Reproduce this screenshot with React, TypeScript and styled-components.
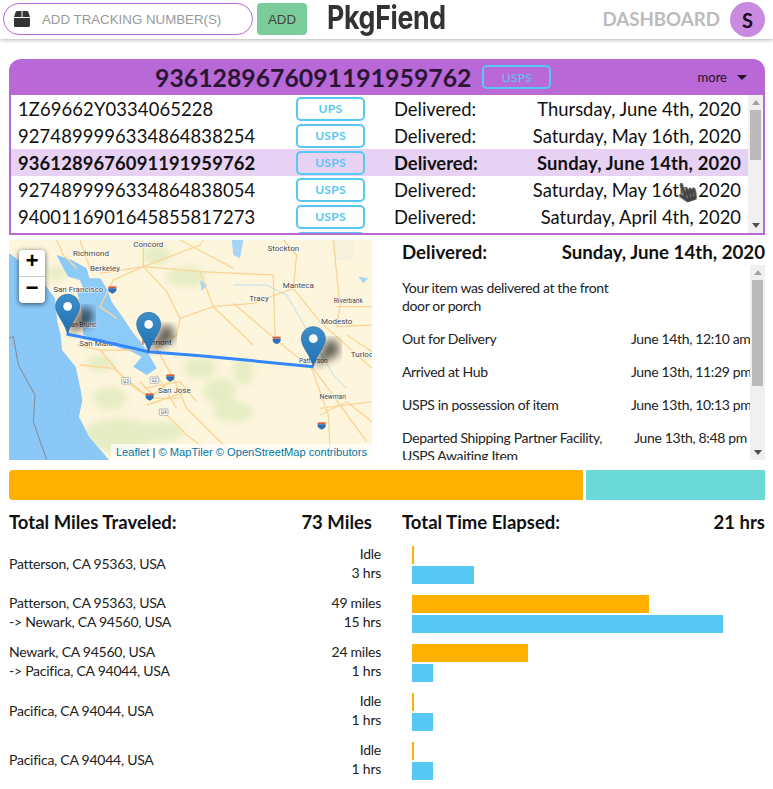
import styled, { createGlobalStyle } from 'styled-components';
import { FaBox, FaHandPointer } from 'react-icons/fa';

const PURPLE = '#b968d8';
const BLUE = '#56c8f3';
const ORANGE = '#ffb000';

const GlobalStyle = createGlobalStyle`
  html, body { margin: 0; padding: 0; background: #fff; }
  body { font-family: Lato, "Noto Sans", sans-serif; color: #111; }
  * { box-sizing: border-box; }
`;

const TopBar = styled.header`
  height: 39px;
  padding: 3px 8px 0 3px;
  display: flex;
  align-items: flex-start;
  box-shadow: 0 1px 4px rgba(0, 0, 0, 0.3);
`;

const SearchPill = styled.div`
  width: 250px;
  height: 32px;
  border: 1px solid ${PURPLE};
  border-radius: 16px;
  display: flex;
  align-items: center;
  padding-left: 10px;
  gap: 12px;
  color: #333;
  font-family: "Liberation Sans", Arial, sans-serif;
`;

const Placeholder = styled.span`
  font-size: 13.3px;
  color: #999;
`;

const AddButton = styled.button`
  width: 50px;
  height: 32px;
  margin-left: 4px;
  border: 0;
  border-radius: 4px;
  background: #7acc9a;
  color: #444;
  font-family: "Liberation Sans", Arial, sans-serif;
  font-size: 13.3px;
  padding: 0;
`;

const Logo = styled.div`
  margin: -6px 0 0 20px;
  width: 120px;
  font-family: Inter, sans-serif;
  font-weight: 700;
  font-size: 33px;
  line-height: 40px;
  letter-spacing: -0.4px;
  white-space: nowrap;
  color: #333;
  transform: scaleX(0.81);
  transform-origin: left center;
`;

const DashboardLink = styled.div`
  margin-left: auto;
  font-size: 18.7px;
  font-weight: 700;
  line-height: 32px;
  color: #bbb;
`;

const Avatar = styled.div`
  width: 35px;
  height: 35px;
  margin: -1px 0 0 10px;
  border-radius: 50%;
  background: #c98be0;
  display: flex;
  align-items: center;
  justify-content: center;
  font-size: 20px;
  font-weight: 700;
  color: #1a0a22;
`;

const Page = styled.main`
  position: relative;
  padding: 20px 8px 0 9px;
`;

const TrackingHead = styled.div`
  height: 36px;
  border-radius: 12px 12px 0 0;
  background: ${PURPLE};
  display: flex;
  align-items: center;
  padding: 0 18px 0 146px;
`;

const HeadNumber = styled.div`
  font-size: 24.8px;
  font-weight: 700;
  color: #2a1633;
`;

const Carrier = styled.div<{ $plain?: boolean }>`
  width: 69px;
  height: 24px;
  border: 2px solid ${BLUE};
  border-radius: 5px;
  display: flex;
  align-items: center;
  justify-content: center;
  flex: none;
  font-size: 12px;
  font-weight: ${(p) => (p.$plain ? 400 : 700)};
  letter-spacing: 0.3px;
  color: ${BLUE};
`;

const HeadCarrier = styled(Carrier)`
  margin-left: 11px;
`;

const More = styled.div`
  margin-left: auto;
  display: flex;
  align-items: center;
  gap: 10px;
  font-size: 13px;
  color: #1f1026;
`;

const Caret = styled.span`
  width: 0;
  height: 0;
  border-left: 5px solid transparent;
  border-right: 5px solid transparent;
  border-top: 5px solid #1f1026;
`;

const TrackingList = styled.div`
  height: 140px;
  border: 2px solid ${PURPLE};
  border-top: 0;
  display: flex;
`;

const ListRows = styled.div`
  flex: 1;
  min-width: 0;
  overflow: hidden;
`;

const Rail = styled.div`
  width: 15px;
  flex: none;
  background: #f0f0f0;
  display: flex;
  flex-direction: column;
`;

const RailArrow = styled.div<{ $down?: boolean }>`
  height: 15px;
  flex: none;
  display: flex;
  align-items: center;
  justify-content: center;
  margin-top: ${(p) => (p.$down ? 'auto' : '0')};

  &::before {
    content: '';
    border-left: 4.5px solid transparent;
    border-right: 4.5px solid transparent;
    ${(p) => (p.$down ? 'border-top: 5px solid #505050;' : 'border-bottom: 5px solid #a3a3a3;')}
  }
`;

const RailThumb = styled.div<{ $height: number }>`
  height: ${(p) => p.$height}px;
  margin: 0 2px;
  background: #bbb;
`;

const TrackingRow = styled.div<{ $active?: boolean }>`
  height: 27px;
  display: flex;
  align-items: center;
  padding: 0 7px;
  font-size: 18.4px;
  font-weight: ${(p) => (p.$active ? 700 : 400)};
  background: ${(p) => (p.$active ? '#e8d2f4' : 'transparent')};
`;

const TrackingNumber = styled.span`
  width: 278px;
  flex: none;
  white-space: nowrap;
  letter-spacing: 0.12px;
`;

const Status = styled.span`
  margin-left: 29px;
`;

const DateText = styled.span<{ $active?: boolean }>`
  margin-left: auto;
  letter-spacing: ${(p) => (p.$active ? '0.17px' : '0')};
`;

const Pointer = styled.div`
  position: absolute;
  left: 677px;
  top: 143px;
  transform: rotate(-18deg);
  color: #444;
  font-size: 20px;
  line-height: 0;
  filter: drop-shadow(0 0 1px #fff);
`;

const MiddleRow = styled.section`
  margin-top: 5px;
  display: grid;
  grid-template-columns: 363px 363px;
  column-gap: 30px;
`;

const MapPane = styled.div`
  position: relative;
  height: 220px;
  overflow: hidden;
`;

const MapDrawing = styled.svg`
  display: block;
  width: 363px;
  height: 220px;
`;

const ZoomControl = styled.div`
  position: absolute;
  left: 10px;
  top: 10px;
  width: 26px;
  border-radius: 4px;
  background: #fff;
  box-shadow: 0 1px 5px rgba(0, 0, 0, 0.65);
`;

const ZoomButton = styled.div<{ $first?: boolean }>`
  height: 26.5px;
  display: flex;
  align-items: center;
  justify-content: center;
  font-family: "Liberation Mono", monospace;
  font-weight: 700;
  font-size: 22px;
  color: #000;
  border-bottom: ${(p) => (p.$first ? '1px solid #ccc' : '0')};
`;

const Attribution = styled.div`
  position: absolute;
  right: 0;
  bottom: 0;
  height: 16px;
  padding: 0 5px;
  background: rgba(255, 255, 255, 0.7);
  font-family: "Liberation Sans", Arial, sans-serif;
  font-size: 11.15px;
  line-height: 16px;
  color: #333;
`;

const AttrLink = styled.span`
  color: #0078a8;
`;

const DetailPane = styled.div`
  min-width: 0;
`;

const DetailHead = styled.div`
  height: 25px;
  padding-bottom: 2px;
  display: flex;
  justify-content: space-between;
  align-items: center;
  font-size: 18.7px;
  font-weight: 700;
`;

const EventFrame = styled.div`
  height: 195px;
  display: flex;
`;

const EventList = styled.div`
  flex: 1;
  min-width: 0;
  overflow: hidden;
  padding-top: 14px;
  display: flex;
  flex-direction: column;
  gap: 15px;
`;

const EventRow = styled.div`
  display: grid;
  grid-template-columns: 229px 119px;
  flex: none;
  font-size: 14px;
  line-height: 18px;
  letter-spacing: -0.35px;
  color: #222;
`;

const EventText = styled.div`
  width: 212px;
`;

const EventTime = styled.div`
  text-align: center;
  white-space: nowrap;
`;

const Progress = styled.div`
  margin-top: 10px;
  height: 30px;
  display: flex;
  gap: 3px;
`;

const ProgressPart = styled.div<{ $color: string; $width: number; $rounded?: boolean }>`
  width: ${(p) => p.$width}px;
  flex: ${(p) => (p.$rounded ? 'none' : 1)};
  background: ${(p) => p.$color};
  border-radius: ${(p) => (p.$rounded ? '4px 0 0 4px' : '0')};
`;

const Totals = styled.div`
  margin-top: 10px;
  height: 25px;
  display: grid;
  grid-template-columns: 363px 363px;
  column-gap: 30px;
`;

const TotalCell = styled.div`
  display: flex;
  justify-content: space-between;
  align-items: center;
  padding-bottom: 2px;
  font-size: 18.5px;
  font-weight: 700;
`;

const Legs = styled.div`
  margin-top: 11px;
  display: flex;
  flex-direction: column;
  gap: 11px;
`;

const Leg = styled.div`
  display: grid;
  grid-template-columns: 372px 1fr;
  grid-template-rows: 34px;
  column-gap: 31px;
  height: 38px;
  font-size: 14px;
  line-height: 19px;
  letter-spacing: -0.25px;
  color: #222;
`;

const LegText = styled.div`
  display: flex;
  justify-content: space-between;
  align-items: center;
`;

const LegValues = styled.div`
  text-align: right;
`;

const LegBars = styled.div`
  display: flex;
  flex-direction: column;
  gap: 2px;
`;

const Bar = styled.div<{ $color: string }>`
  height: 18px;
  flex: none;
  background: ${(p) => p.$color};
`;

const rows = [
  { id: '1Z69662Y0334065228', carrier: 'UPS', date: 'Thursday, June 4th, 2020' },
  { id: '9274899996334864838254', carrier: 'USPS', date: 'Saturday, May 16th, 2020' },
  { id: '9361289676091191959762', carrier: 'USPS', date: 'Sunday, June 14th, 2020', active: true },
  { id: '9274899996334864838054', carrier: 'USPS', date: 'Saturday, May 16th, 2020' },
  { id: '9400116901645855817273', carrier: 'USPS', date: 'Saturday, April 4th, 2020' },
];

const events = [
  { text: 'Your item was delivered at the front door or porch', time: '' },
  { text: 'Out for Delivery', time: 'June 14th, 12:10 am' },
  { text: 'Arrived at Hub', time: 'June 13th, 11:29 pm' },
  { text: 'USPS in possession of item', time: 'June 13th, 10:13 pm' },
  { text: 'Departed Shipping Partner Facility, USPS Awaiting Item', time: 'June 13th, 8:48 pm' },
];

const legs = [
  { from: 'Patterson, CA 95363, USA', to: '', miles: 'Idle', hrs: '3 hrs', milesW: 2, hrsW: 62 },
  { from: 'Patterson, CA 95363, USA', to: '-> Newark, CA 94560, USA', miles: '49 miles', hrs: '15 hrs', milesW: 237, hrsW: 311 },
  { from: 'Newark, CA 94560, USA', to: '-> Pacifica, CA 94044, USA', miles: '24 miles', hrs: '1 hrs', milesW: 116, hrsW: 21 },
  { from: 'Pacifica, CA 94044, USA', to: '', miles: 'Idle', hrs: '1 hrs', milesW: 2, hrsW: 21 },
  { from: 'Pacifica, CA 94044, USA', to: '', miles: 'Idle', hrs: '1 hrs', milesW: 2, hrsW: 21 },
];

const mapLabels: [string, number, number, number?][] = [
  ['Concord', 445, 35], ['Richmond', 273, 63], ['Berkeley', 315, 108], ['San Francisco', 235, 171],
  ['Stockton', 850, 48], ['Manteca', 895, 158], ['Tracy', 777, 198], ['Riverbank', 1045, 203, 20],
  ['Modesto', 1010, 268], ['Turlock', 1092, 366], ['San Bruno', 245, 276, 20], ['San Mateo', 295, 333],
  ['Fremont', 470, 330], ['Patterson', 940, 385, 20], ['San Jose', 523, 475], ['Newman', 998, 493, 20],
];

const roads = [
  'M430 95 L600 30 L610 15', 'M430 95 L340 135 L300 215 L350 250', 'M430 95 L500 170 L540 250 L530 300 L470 340',
  'M540 250 L640 215 L760 205 L880 160 L890 60 L850 15', 'M880 160 L960 260 L1116 400', 'M700 205 L835 320 L935 400 L985 540 L990 640',
  'M820 120 L825 310', 'M960 520 L1116 500', 'M1010 275 L1116 270', 'M940 400 L1100 620', 'M470 340 L520 430 L560 520 L680 640',
  'M230 330 L300 345 L440 345', 'M300 345 L380 440 L450 490 L540 490', 'M520 430 L460 480 L420 440', 'M300 115 L430 95 L600 110 L820 120',
  'M430 40 L430 95', 'M600 110 L640 215', 'M1010 215 L1116 215', 'M960 540 L1040 500 L1116 560', 'M490 530 L560 600 L640 660',
  'M240 390 L340 400 L450 490', 'M640 215 L760 330', 'M430 460 L540 440 L590 500', 'M440 510 L560 470', 'M470 420 L530 520',
  'M1000 15 L1020 215 L1010 275', 'M240 15 L270 100', 'M170 15 L190 60 L230 100', 'M1040 300 L1116 350', 'M540 15 L700 100',
];

const parks: [number, number, number, number][] = [
  [330, 490, 50, 35], [360, 600, 110, 50], [480, 590, 70, 30], [660, 470, 50, 40], [600, 400, 50, 30],
  [560, 125, 60, 30], [730, 410, 30, 40], [300, 385, 40, 25], [170, 115, 28, 22], [470, 60, 40, 30],
  [700, 530, 60, 30],
];

const pins = [
  { x: 203, y: 298 },
  { x: 446, y: 352 },
  { x: 940, y: 395 },
];

const shields = [[337, 163], [830, 314], [511, 427], [449, 484], [965, 571]];
const routes = [['G3', 378, 437], ['G2', 463, 435], ['G4', 491, 531]] as const;

const TransitMap = () => (
  <MapDrawing viewBox="27 15 1089 660">
    <defs>
      <linearGradient id="pinFill" x1="0" y1="0" x2="0" y2="1">
        <stop offset="0" stopColor="#3f8fcb" />
        <stop offset="1" stopColor="#1e6fb0" />
      </linearGradient>
      <filter id="soft"><feGaussianBlur stdDeviation="9" /></filter>
      <filter id="softer"><feGaussianBlur stdDeviation="12" /></filter>
      <filter id="edge"><feGaussianBlur stdDeviation="1" /></filter>
    </defs>
    <rect x="27" y="15" width="1089" height="660" fill="#fdf5dc" />
    <g filter="url(#soft)">
      {parks.map(([x, y, rx, ry]) => (
        <ellipse key={`${x}-${y}`} cx={x} cy={y} rx={rx} ry={ry} fill="#e6edc4" />
      ))}
    </g>
    <rect x="1000" y="15" width="60" height="60" fill="#f6f1dc" />
    <path
      fill="#89c8f7"
      filter="url(#edge)"
      d="M27 55 L90 100 L135 150 L165 190 L172 260 L182 300 L186 345 L227 395 L242 465 L247 495 L237 545 L267 605 L327 675 L27 675 Z"
    />
    <path
      fill="#8ccaf8"
      filter="url(#edge)"
      d="M170 60 L215 75 L260 100 L268 130 L300 130 L320 160 L335 200 L370 250 L400 295 L430 330 L470 400 L440 420 L400 395 L425 365 L395 350 L330 330 L250 300 L246 240 L240 205 L232 175 L250 160 L240 135 L205 125 L190 100 Z"
    />
    <path fill="#a6d5f8" d="M600 135 L622 150 L605 168 Z M1075 125 L1105 130 L1090 145 Z M695 15 L730 15 L720 70 L700 60 Z" />
    <path fill="none" stroke="#888" strokeWidth="3" d="M27 310 L40 305 L55 390 L105 480 L100 560 L140 675" />
    <path fill="none" stroke="#9fb6c6" strokeWidth="2" strokeDasharray="8 6" d="M155 345 L180 430 L210 560 L290 675" />
    <g fill="none" stroke="#fbd597" strokeWidth="4">
      {roads.map((d) => (
        <path key={d} d={d} />
      ))}
    </g>
    <path fill="none" stroke="#a3d3f3" strokeWidth="2" d="M700 150 L800 150 L860 180 L930 300 L1000 420 L1040 460" />
    {shields.map(([x, y]) => (
      <g key={`${x}-${y}`}>
        <path d={`M${x - 12} ${y - 9} h24 v6 h-24 z`} fill="#d9603f" />
        <path d={`M${x - 12} ${y - 3} h24 v6 q-2 8 -12 10 q-10 -2 -12 -10 z`} fill="#2f6fb8" />
      </g>
    ))}
    {routes.map(([t, x, y]) => (
      <g key={t}>
        <rect x={x - 13} y={y - 9} width="26" height="19" rx="2" fill="#fff" stroke="#999" strokeWidth="2" />
        <text x={x} y={y + 6} textAnchor="middle" fontSize="14" fontFamily="Roboto, sans-serif" fill="#555">{t}</text>
      </g>
    ))}
    {mapLabels.map(([t, x, y, size]) => (
      <text
        key={t}
        x={x}
        y={y}
        textAnchor="middle"
        fontFamily="Roboto, sans-serif"
        fontSize={size ?? 24}
        fill="#444"
        stroke="#fff"
        strokeWidth="3"
        paintOrder="stroke"
      >
        {t}
      </text>
    ))}
    {pins.map((p) => (
      <path
        key={`shadow-${p.x}`}
        d={`M${p.x} ${p.y} L${p.x + 40} ${p.y - 80} Q${p.x + 85} ${p.y - 90} ${p.x + 75} ${p.y - 35} Z`}
        fill="#000"
        opacity="0.6"
        filter="url(#softer)"
      />
    ))}
    <polyline
      points="200,297 300,317 380,335 445,350 600,362 940,395"
      fill="none"
      stroke="#3388ff"
      strokeWidth="9"
      strokeLinejoin="round"
    />
    {pins.map((p) => (
      <g key={p.x} transform={`translate(${p.x - 37},${p.y - 121})`}>
        <path
          d="M37 121 C31 90 1 62 1 37 C1 17 17 1 37 1 C57 1 73 17 73 37 C73 62 43 90 37 121 Z"
          fill="url(#pinFill)"
          stroke="#2a6a9e"
          strokeWidth="2"
        />
        <circle cx="37" cy="37" r="13" fill="#fff" />
      </g>
    ))}
  </MapDrawing>
);

const App = () => (
  <>
    <GlobalStyle />
    <TopBar>
      <SearchPill>
        <FaBox size={16} />
        <Placeholder>ADD TRACKING NUMBER(S)</Placeholder>
      </SearchPill>
      <AddButton>ADD</AddButton>
      <Logo>PkgFiend</Logo>
      <DashboardLink>DASHBOARD</DashboardLink>
      <Avatar>S</Avatar>
    </TopBar>
    <Page>
      <TrackingHead>
        <HeadNumber>9361289676091191959762</HeadNumber>
        <HeadCarrier $plain>USPS</HeadCarrier>
        <More>
          more
          <Caret />
        </More>
      </TrackingHead>
      <TrackingList>
        <ListRows>
          {rows.map((r) => (
            <TrackingRow key={r.id} $active={r.active}>
              <TrackingNumber>{r.id}</TrackingNumber>
              <Carrier>{r.carrier}</Carrier>
              <Status>Delivered:</Status>
              <DateText $active={r.active}>{r.date}</DateText>
            </TrackingRow>
          ))}
          <TrackingRow>
            <TrackingNumber />
            <Carrier />
          </TrackingRow>
        </ListRows>
        <Rail>
          <RailArrow />
          <RailThumb $height={50} />
          <RailArrow $down />
        </Rail>
      </TrackingList>
      <Pointer>
        <FaHandPointer />
      </Pointer>
      <MiddleRow>
        <MapPane>
          <TransitMap />
          <ZoomControl>
            <ZoomButton $first>+</ZoomButton>
            <ZoomButton>−</ZoomButton>
          </ZoomControl>
          <Attribution>
            <AttrLink>Leaflet</AttrLink> | <AttrLink>© MapTiler © OpenStreetMap contributors</AttrLink>
          </Attribution>
        </MapPane>
        <DetailPane>
          <DetailHead>
            <span>Delivered:</span>
            <span>Sunday, June 14th, 2020</span>
          </DetailHead>
          <EventFrame>
            <EventList>
              {events.map((e) => (
                <EventRow key={e.text}>
                  <EventText>{e.text}</EventText>
                  <EventTime>{e.time}</EventTime>
                </EventRow>
              ))}
            </EventList>
            <Rail>
              <RailArrow />
              <RailThumb $height={106} />
              <RailArrow $down />
            </Rail>
          </EventFrame>
        </DetailPane>
      </MiddleRow>
      <Progress>
        <ProgressPart $color={ORANGE} $width={574} $rounded />
        <ProgressPart $color="#6cd9d9" $width={179} />
      </Progress>
      <Totals>
        <TotalCell>
          <span>Total Miles Traveled:</span>
          <span>73 Miles</span>
        </TotalCell>
        <TotalCell>
          <span>Total Time Elapsed:</span>
          <span>21 hrs</span>
        </TotalCell>
      </Totals>
      <Legs>
        {legs.map((l, i) => (
          <Leg key={i}>
            <LegText>
              <div>
                <div>{l.from}</div>
                {l.to && <div>{l.to}</div>}
              </div>
              <LegValues>
                <div>{l.miles}</div>
                <div>{l.hrs}</div>
              </LegValues>
            </LegText>
            <LegBars>
              <Bar $color={ORANGE} style={{ width: l.milesW }} />
              <Bar $color={BLUE} style={{ width: l.hrsW }} />
            </LegBars>
          </Leg>
        ))}
      </Legs>
    </Page>
  </>
);

export default App;
